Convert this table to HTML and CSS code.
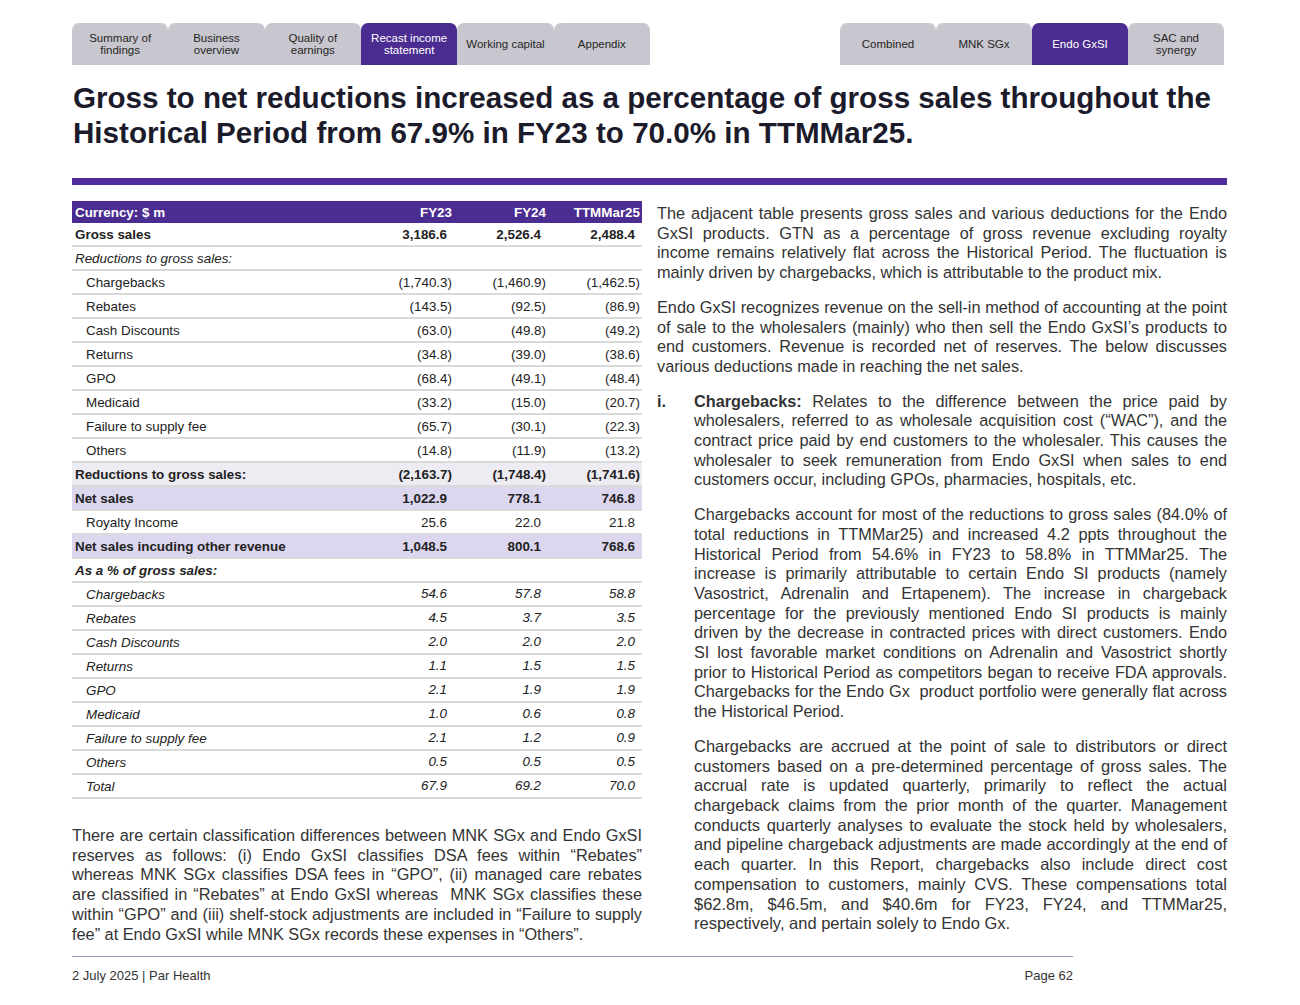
FILE: index.html
```html
<!DOCTYPE html>
<html lang="en">
<head>
<meta charset="utf-8">
<title>Gross to net reductions</title>
<link rel="stylesheet" href="styles.css">
</head>
<body>
<div class="page">
  <nav class="tabbar">
    <div class="tabs six">
      <div class="tab">Summary of<br>findings</div>
      <div class="tab">Business<br>overview</div>
      <div class="tab">Quality of<br>earnings</div>
      <div class="tab active">Recast income<br>statement</div>
      <div class="tab">Working capital</div>
      <div class="tab">Appendix</div>
    </div>
    <div class="tabs four">
      <div class="tab">Combined</div>
      <div class="tab">MNK SGx</div>
      <div class="tab active">Endo GxSI</div>
      <div class="tab">SAC and<br>synergy</div>
    </div>
  </nav>

  <h1 class="title">Gross to net reductions increased as a percentage of gross sales throughout the Historical Period from 67.9% in FY23 to 70.0% in TTMMar25.</h1>
  <div class="rule"></div>

  <div class="cols">
    <div class="left">
      <table class="fin">
        <thead>
          <tr><th>Currency: $ m</th><th class="v">FY23</th><th class="v">FY24</th><th class="v">TTMMar25</th></tr>
        </thead>
        <tbody>
          <tr class="bold"><td>Gross sales</td><td class="v">3,186.6</td><td class="v">2,526.4</td><td class="v">2,488.4</td></tr>
          <tr class="sub"><td colspan="4">Reductions to gross sales:</td></tr>
          <tr class="neg"><td class="ind">Chargebacks</td><td class="v">(1,740.3)</td><td class="v">(1,460.9)</td><td class="v">(1,462.5)</td></tr>
          <tr class="neg"><td class="ind">Rebates</td><td class="v">(143.5)</td><td class="v">(92.5)</td><td class="v">(86.9)</td></tr>
          <tr class="neg"><td class="ind">Cash Discounts</td><td class="v">(63.0)</td><td class="v">(49.8)</td><td class="v">(49.2)</td></tr>
          <tr class="neg"><td class="ind">Returns</td><td class="v">(34.8)</td><td class="v">(39.0)</td><td class="v">(38.6)</td></tr>
          <tr class="neg"><td class="ind">GPO</td><td class="v">(68.4)</td><td class="v">(49.1)</td><td class="v">(48.4)</td></tr>
          <tr class="neg"><td class="ind">Medicaid</td><td class="v">(33.2)</td><td class="v">(15.0)</td><td class="v">(20.7)</td></tr>
          <tr class="neg"><td class="ind">Failure to supply fee</td><td class="v">(65.7)</td><td class="v">(30.1)</td><td class="v">(22.3)</td></tr>
          <tr class="neg"><td class="ind">Others</td><td class="v">(14.8)</td><td class="v">(11.9)</td><td class="v">(13.2)</td></tr>
          <tr class="neg bold total"><td>Reductions to gross sales:</td><td class="v">(2,163.7)</td><td class="v">(1,748.4)</td><td class="v">(1,741.6)</td></tr>
          <tr class="bold hl"><td>Net sales</td><td class="v">1,022.9</td><td class="v">778.1</td><td class="v">746.8</td></tr>
          <tr><td class="ind">Royalty Income</td><td class="v">25.6</td><td class="v">22.0</td><td class="v">21.8</td></tr>
          <tr class="bold hl"><td>Net sales incuding other revenue</td><td class="v">1,048.5</td><td class="v">800.1</td><td class="v">768.6</td></tr>
          <tr class="sub strong"><td colspan="4">As a % of gross sales:</td></tr>
          <tr class="pct"><td class="ind">Chargebacks</td><td class="v">54.6</td><td class="v">57.8</td><td class="v">58.8</td></tr>
          <tr class="pct"><td class="ind">Rebates</td><td class="v">4.5</td><td class="v">3.7</td><td class="v">3.5</td></tr>
          <tr class="pct"><td class="ind">Cash Discounts</td><td class="v">2.0</td><td class="v">2.0</td><td class="v">2.0</td></tr>
          <tr class="pct"><td class="ind">Returns</td><td class="v">1.1</td><td class="v">1.5</td><td class="v">1.5</td></tr>
          <tr class="pct"><td class="ind">GPO</td><td class="v">2.1</td><td class="v">1.9</td><td class="v">1.9</td></tr>
          <tr class="pct"><td class="ind">Medicaid</td><td class="v">1.0</td><td class="v">0.6</td><td class="v">0.8</td></tr>
          <tr class="pct"><td class="ind">Failure to supply fee</td><td class="v">2.1</td><td class="v">1.2</td><td class="v">0.9</td></tr>
          <tr class="pct"><td class="ind">Others</td><td class="v">0.5</td><td class="v">0.5</td><td class="v">0.5</td></tr>
          <tr class="pct"><td class="ind">Total</td><td class="v">67.9</td><td class="v">69.2</td><td class="v">70.0</td></tr>
        </tbody>
      </table>
      <p class="text note">There are certain classification differences between MNK SGx and Endo GxSI reserves as follows: (i) Endo GxSI classifies DSA fees within “Rebates” whereas MNK SGx classifies DSA fees in “GPO”, (ii) managed care rebates are classified in “Rebates” at Endo GxSI whereas&nbsp; MNK SGx classifies these within “GPO” and (iii) shelf-stock adjustments are included in “Failure to supply fee” at Endo GxSI while MNK SGx records these expenses in “Others”.</p>
    </div>

    <div class="right text">
      <p>The adjacent table presents gross sales and various deductions for the Endo GxSI products. GTN as a percentage of gross revenue excluding royalty income remains relatively flat across the Historical Period. The fluctuation is mainly driven by chargebacks, which is attributable to the product mix.</p>
      <p>Endo GxSI recognizes revenue on the sell-in method of accounting at the point of sale to the wholesalers (mainly) who then sell the Endo GxSI’s products to end customers. Revenue is recorded net of reserves. The below discusses various deductions made in reaching the net sales.</p>
      <div class="item">
        <div class="num">i.</div>
        <div class="body">
          <p><b>Chargebacks:</b> Relates to the difference between the price paid by wholesalers, referred to as wholesale acquisition cost (“WAC”), and the contract price paid by end customers to the wholesaler. This causes the wholesaler to seek remuneration from Endo GxSI when sales to end customers occur, including GPOs, pharmacies, hospitals, etc.</p>
          <p>Chargebacks account for most of the reductions to gross sales (84.0% of total reductions in TTMMar25) and increased 4.2 ppts throughout the Historical Period from 54.6% in FY23 to 58.8% in TTMMar25. The increase is primarily attributable to certain Endo SI products (namely Vasostrict, Adrenalin and Ertapenem). The increase in chargeback percentage for the previously mentioned Endo SI products is mainly driven by the decrease in contracted prices with direct customers. Endo SI lost favorable market conditions on Adrenalin and Vasostrict shortly prior to Historical Period as competitors began to receive FDA approvals. Chargebacks for the Endo Gx&nbsp; product portfolio were generally flat across the Historical Period.</p>
          <p class="last">Chargebacks are accrued at the point of sale to distributors or direct customers based on a pre-determined percentage of gross sales. The accrual rate is updated quarterly, primarily to reflect the actual chargeback claims from the prior month of the quarter. Management conducts quarterly analyses to evaluate the stock held by wholesalers, and pipeline chargeback adjustments are made accordingly at the end of each quarter. In this Report, chargebacks also include direct cost compensation to customers, mainly CVS. These compensations total $62.8m, $46.5m, and $40.6m for FY23, FY24, and TTMMar25, respectively, and pertain solely to Endo Gx.</p>
        </div>
      </div>
    </div>
  </div>

  <footer class="foot">
    <span>2 July 2025 | Par Health</span>
    <span>Page 62</span>
  </footer>
</div>
</body>
</html>
```

FILE: styles.css
```css
html, body {
  margin: 0;
  padding: 0;
  background: #ffffff;
}

body {
  font-family: "Liberation Sans", Arial, sans-serif;
  color: #333333;
}

.page {
  width: 1155px;
  margin-left: 72px;
  padding-top: 23px;
}

/* Tabs */
.tabbar {
  display: flex;
  justify-content: space-between;
  padding-right: 3px;
}

.tabs {
  display: flex;
}

.tabs.six .tab {
  width: 96.33px;
}

.tabs.four .tab {
  width: 96px;
}

.tab {
  height: 42px;
  background: #c8c6ce;
  border-radius: 7px 7px 0 0;
  display: flex;
  align-items: center;
  justify-content: center;
  text-align: center;
  font-size: 11.5px;
  line-height: 12px;
  color: #262626;
}

.tab.active {
  background: #4b2c91;
  color: #ffffff;
}

/* Title */
.title {
  margin: 14.5px 0 0;
  padding-left: 1px;
  font-size: 29.6px;
  line-height: 35px;
  font-weight: bold;
  color: #1b1b2b;
}

.rule {
  height: 7px;
  background: #4f2d9e;
  margin-top: 28px;
}

/* Columns */
.cols {
  display: flex;
  gap: 15px;
  margin-top: 16.5px;
}

.left {
  width: 570px;
  flex: none;
}

.right {
  width: 570px;
  flex: none;
  padding-top: 3px;
}

/* Table */
.fin {
  width: 570px;
  border-collapse: separate;
  border-spacing: 0;
  font-size: 13.4px;
  color: #222222;
  table-layout: fixed;
}

.fin th {
  background: #4b2c91;
  color: #ffffff;
  font-weight: bold;
  height: 22px;
  padding: 0 2px 0 3px;
  text-align: left;
}

.fin th.v {
  width: 89px;
  text-align: right;
  padding-right: 2px;
}

.fin td {
  box-sizing: border-box;
  height: 24px;
  padding: 0 2px 0 3px;
  border-bottom: 2px solid #dadada;
  white-space: nowrap;
}

.fin td.v {
  text-align: right;
  padding-right: 7px;
}

.fin tr.neg td.v {
  padding-right: 2px;
}

.fin td.ind {
  padding-left: 14px;
}

.fin tr.bold td {
  font-weight: bold;
}

.fin tr.sub td {
  font-style: italic;
}

.fin tr.sub.strong td {
  font-weight: bold;
}

.fin tr.total td {
  background: #eeecf3;
}

.fin tr.hl td {
  background: #dcd6ee;
}

.fin tr.pct td {
  font-style: italic;
}

.fin tr.pct td.v {
  vertical-align: top;
  padding-top: 3px;
}

/* Text */
.text {
  font-size: 16.3px;
  line-height: 19.7px;
  text-align: justify;
  color: #333333;
}

.text p {
  margin: 0 0 15px;
}

.text p.last {
  margin-bottom: 0;
  font-size: 16.5px;
}

.note {
  margin: 27px 0 0;
}

.item {
  display: flex;
}

.item .num {
  width: 37px;
  flex: none;
  font-weight: bold;
}

.item .body {
  flex: 1;
}

/* Footer */
.foot {
  width: 1001px;
  margin-top: 12px;
  border-top: 1px solid #9d98c2;
  padding-top: 11px;
  display: flex;
  justify-content: space-between;
  font-size: 13px;
  line-height: 16px;
  color: #333333;
}
```
